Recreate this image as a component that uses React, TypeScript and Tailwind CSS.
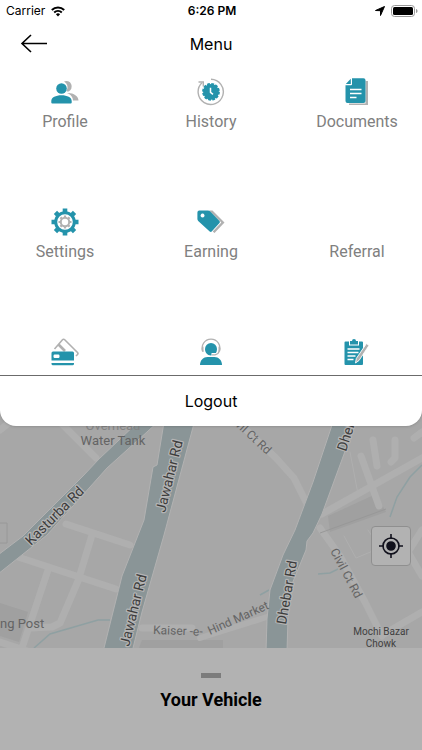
import React from "react"

const TEAL = "#2493ab"
const GREY = "#b1b1b1"

function ProfileIcon() {
  return (
    <svg viewBox="0 0 28 28" className="size-7">
      <g fill={GREY}>
        <path d="M13 3.500a5 5 0 1 1 4.500 10c-.8.100-1.500-.2-2-.6a6.500 6.500 0 0 0-2.500-9.400z" />
        <path d="M16 15c6-.5 11.500 3 11.500 7.500h-5.500c0-3.500-2.500-6.200-6-7.500z" />
      </g>
      <circle cx="10.500" cy="10.500" r="5.300" fill={TEAL} />
      <path d="M.3 24.500V23c0-3.500 4.500-5.700 10.200-5.700S20.700 19.500 20.700 23v1.500a1 1 0 0 1-1 1H1.300a1 1 0 0 1-1-1z" fill={TEAL} />
    </svg>
  )
}

function HistoryIcon() {
  return (
    <svg viewBox="0 0 28 28" className="size-7" fill="none">
      <path d="M14 1.200a12.600 12.600 0 1 1-9 3.500" stroke={GREY} strokeWidth="1.400" />
      <path d="M1.500 4h4.800v4.500" stroke={GREY} strokeWidth="1.400" />
      <circle cx="14" cy="13.800" r="7.900" fill={TEAL} />
      <circle cx="14" cy="13.800" r="8" stroke={TEAL} strokeWidth="1.800" strokeDasharray="2.800 1.390" />
      <path d="M13.500 9.800v4.500l2.500 2" stroke="white" strokeWidth="1.500" />
    </svg>
  )
}

function DocumentsIcon() {
  return (
    <svg viewBox="0 0 28 28" className="size-7">
      <path d="M22.500 3H25v24H6v-1.500h16.500z" fill={GREY} />
      <path d="M9 .3h11.500a2 2 0 0 1 2 2V23a2 2 0 0 1-2 2h-16a2 2 0 0 1-2-2V7.300H8a1 1 0 0 0 1-1z" fill={TEAL} />
      <path d="M2.800 6 7.800.8V6z" fill={TEAL} />
      <path d="M7 11.500h11.500M7 15.500h11.500M7 19.500h6.500" stroke="white" strokeWidth="1.400" />
    </svg>
  )
}

function Gear({ size, hole, color }: { size: number; hole: number; color: string }) {
  const body = size * 0.8
  return (
    <g stroke={color} fill="none">
      <circle cx="14" cy="14" r={(body + hole) / 2} strokeWidth={body - hole} />
      {[0, 45, 90, 135].map((angle) => (
        <path
          key={angle}
          d={`M14 ${14 - size}V${14 - hole - 1}M14 ${14 + hole + 1}V${14 + size}`}
          strokeWidth={size * 0.34}
          transform={`rotate(${angle} 14 14)`}
        />
      ))}
    </g>
  )
}

function SettingsIcon() {
  return (
    <svg viewBox="0 0 28 28" className="size-7">
      <Gear size={13.500} hole={7.800} color={TEAL} />
      <Gear size={6.500} hole={3.200} color={GREY} />
    </svg>
  )
}

function EarningIcon() {
  return (
    <svg viewBox="0 0 28 28" className="size-7">
      <path d="M12 2.500h3.500L27.500 14.500 17.500 25l-1.800-1.500 8.600-9z" fill={GREY} />
      <path
        fillRule="evenodd"
        d="M2.500 2.500h8.500a3 3 0 0 1 2 .8L22.500 13a1.500 1.500 0 0 1 0 2l-7.800 8.500a1.500 1.500 0 0 1-2 0L1.200 13a3 3 0 0 1-.8-2V4.500a2 2 0 0 1 2.100-2zM5.500 5.600a2 2 0 1 0 .1 0z"
        fill={TEAL}
      />
    </svg>
  )
}

function CardsIcon() {
  return (
    <svg viewBox="0 0 28 28" className="size-7">
      <path d="M3.500 11 11.500 1.800a1.500 1.500 0 0 1 2.200-.1L26.500 14.500a1.500 1.500 0 0 1 0 2L25 18" fill="none" stroke={GREY} strokeWidth="1.600" />
      <path d="M7.500 6.500l6.500 6.500" stroke={GREY} strokeWidth="2.600" />
      <path d="M2 13.500h19.500a1.500 1.500 0 0 1 1.500 1.500v7.500H.5V15A1.500 1.500 0 0 1 2 13.500z" fill={TEAL} />
      <path d="M.5 25H23v.7a1.500 1.500 0 0 1-1.500 1.500H2A1.500 1.500 0 0 1 .5 25.700z" fill={TEAL} />
      <rect x="2.500" y="16.500" width="6" height="3.500" rx="1.200" fill="white" />
    </svg>
  )
}

function SupportIcon() {
  return (
    <svg viewBox="0 0 28 28" className="size-7">
      <path d="M6 13.500a8.800 8.800 0 1 1 16 0c-.3 2-2 3-4 3.300h-3" fill="none" stroke={GREY} strokeWidth="1.200" />
      <path d="M6.500 8.500v5.500a2 2 0 0 1-2-2v-1.500a2 2 0 0 1 2-2zM21.500 8.500a2 2 0 0 1 2 2V12a2 2 0 0 1-2 2z" fill={GREY} />
      <path d="M8 11a6 6 0 0 1 12 0c0 1.500-.4 2.900-1.100 4h-4.400v2.400C10.500 17.700 8 14.800 8 11z" fill={TEAL} />
      <path d="M3 27c0-5 3.500-8 7.500-8h7c4 0 7.500 3 7.500 8z" fill={TEAL} />
    </svg>
  )
}

function SurveyIcon() {
  return (
    <svg viewBox="0 0 28 28" className="size-7">
      <path d="M2.500 3.500H6V7.500h10v-4h3a1 1 0 0 1 1 1V26a1 1 0 0 1-1 1H2.500a1 1 0 0 1-1-1V4.500a1 1 0 0 1 1-1z" fill={TEAL} />
      <path d="M7 3h2a2 2 0 0 1 4 0h2v3.500H7z" fill={TEAL} />
      <path d="M4.500 11h12M4.500 14.500h11M4.500 18h8M4.500 21.500h6" stroke="white" strokeWidth="1.300" />
      <path d="M12.500 25l.8-4.500L23.500 5.500l2.500 2L16 22.500z" fill={GREY} stroke="white" strokeWidth=".9" />
    </svg>
  )
}

const items = [
  { label: "Profile", icon: <ProfileIcon /> },
  { label: "History", icon: <HistoryIcon /> },
  { label: "Documents", icon: <DocumentsIcon /> },
  { label: "Settings", icon: <SettingsIcon /> },
  { label: "Earning", icon: <EarningIcon /> },
  { label: "Referral", icon: null },
  { label: "", name: "Payment", icon: <CardsIcon /> },
  { label: "", name: "Support", icon: <SupportIcon /> },
  { label: "", name: "Survey", icon: <SurveyIcon /> },
]

function StatusBar() {
  return (
    <div className="grid h-[22px] grid-cols-3 items-center pr-1 pl-1.5 font-['Inter',sans-serif] text-xs text-black">
      <div className="flex items-center gap-1.5">
        <span>Carrier</span>
        <svg viewBox="0 0 14 11" className="h-[11px] w-3.5" fill="none" stroke="black" strokeWidth="2">
          <path d="M.8 4a9 9 0 0 1 12.400 0M3.200 6.500a5.500 5.500 0 0 1 7.600 0" />
          <path d="M7 10.500 4.900 8.300a3 3 0 0 1 4.200 0z" fill="black" stroke="none" />
        </svg>
      </div>
      <span className="text-center font-semibold">6:26 PM</span>
      <div className="flex items-center justify-end gap-1.5">
        <svg viewBox="0 0 10 10" className="size-2.5">
          <path d="M9.500.5 5.500 9.500V4.700L.5 4.500z" fill="black" stroke="black" strokeLinejoin="round" />
        </svg>
        <svg viewBox="0 0 27 12" className="h-3 w-[27px]">
          <rect x=".5" y=".5" width="23" height="11" rx="3" fill="none" stroke="#999" />
          <rect x="2" y="2" width="20" height="8" rx="1.500" fill="black" />
          <path d="M25 4c2 .5 2 3.500 0 4z" fill="#999" />
        </svg>
      </div>
    </div>
  )
}

function MapView() {
  return (
    <svg
      viewBox="0 410 422 238"
      preserveAspectRatio="xMidYMid slice"
      className="absolute inset-0 size-full font-['Roboto',sans-serif]"
      aria-label="Map"
    >
      <rect y="400" width="422" height="260" fill="#a7a7a7" />
      {/* building blocks */}
      <g fill="#a0a0a0">
        <path d="M0 603l28 9-9 30-19-6z" />
        <path d="M142 640h81v8h-84z" />
        <path d="M328 516l48-22 10 18-56 20z" />
      </g>
      {/* side streets */}
      <g fill="none" stroke="#afafaf" strokeWidth="7" strokeLinejoin="round" strokeLinecap="round">
        <path d="M0 430l10-8M62 424l34 34M66 524l64 21M18 557l98 32M92 535l-14 46-18 42-8 4-22 1M48 570l-26 78M0 642l30 10" />
        <path d="M240 424l36 34 18 20 14 28M320 528l20 28 25 46 17 34M322 514l100-56M361 456l18 50M373 440l4 26M395 440v18l-4 4M422 432l-8 6M384 634l38-22M142 628h50M422 530l-14 22 14 24" />
        <path d="M200 638l70-22" strokeWidth="6" />
        <path d="M350 452l8 42M344 536l12 22 24-10-12-18" strokeWidth="1" />
      </g>
      <path d="M0 523h7v20H0M320 533l66-24" fill="none" stroke="#989898" />
      {/* streams */}
      <path d="M34 648l16-14 48-14h12M422 465l-12 12-13 20-7 20M318 574l12-1 8-4M260 595l9-5" fill="none" stroke="#8fa0a2" strokeWidth="1.500" />
      {/* main roads */}
      <g fill="#8a9597" stroke="#b2b2b2" strokeWidth="1">
        <path d="M138 422h20l-51 46-60 67L-2 574v-19l25-19 60-60 16-17z" />
        <path d="M165 416h31l-32 119-22 77-10 40h-29l13-52 6-24 22-56 9-53 4-2z" />
        <path d="M335 416h23l-36 98-9 19-6 8-1 9-14 34-4 34-1 34h-21l1-33 3-29 13-35 12-25 18-48z" />
      </g>
      <g fontSize="14" fill="#3d3d3d" stroke="#b4b4b4" strokeWidth="2.500" paintOrder="stroke" strokeLinejoin="round">
        <text transform="translate(31 546) rotate(-45)">Kasturba Rd</text>
        <text transform="translate(165 513) rotate(-76)">Jawahar Rd</text>
        <text transform="translate(129 647) rotate(-76)">Jawahar Rd</text>
        <text transform="translate(286 625) rotate(-80)">Dhebar Rd</text>
        <text transform="translate(346 452) rotate(-72)">Dhebar Rd</text>
      </g>
      <g fontSize="12" fill="#646464">
        <text x="113" y="430" fontSize="13" textAnchor="middle" fill="#858585">Overhead</text>
        <text x="113" y="445" fontSize="13" textAnchor="middle">Water Tank</text>
        <text x="0" y="628" fontSize="13">ng Post</text>
        <text transform="translate(227 418) rotate(43)">Civil Ct Rd</text>
        <text transform="translate(330 551) rotate(62)">Civil Ct Rd</text>
        <text transform="translate(153 634) rotate(2)">Kaiser -e-</text>
        <text transform="translate(210 635) rotate(-24)">Hind Market</text>
      </g>
      <g fontSize="10" fill="#404040" textAnchor="middle">
        <text x="381" y="635">Mochi Bazar</text>
        <text x="381" y="647">Chowk</text>
      </g>
    </svg>
  )
}

export default function App() {
  return (
    <div className="flex min-h-screen flex-col bg-[#b2b2b2] font-['Roboto',sans-serif]">
      <div className="relative z-10 rounded-b-2xl bg-white shadow-sm">
        <StatusBar />
        <header className="grid h-11 grid-cols-3 items-center px-5">
          <button type="button" aria-label="Back" className="w-fit">
            <svg viewBox="0 0 28 20" className="h-5 w-7" fill="none" stroke="black" strokeWidth="1.600">
              <path d="M27 9.500H2M11 1 2 9.500l9 8.500" />
            </svg>
          </button>
          <h1 className="text-center font-['Inter',sans-serif] text-base text-black">Menu</h1>
        </header>
        <nav className="grid h-[309px] grid-cols-[130px_1fr_130px] overflow-hidden pt-3">
          {items.map((item) => (
            <a
              key={item.label || item.name}
              href="#"
              aria-label={item.label || item.name}
              className="flex h-[130px] flex-col items-center gap-1"
            >
              <span className="size-7">{item.icon}</span>
              <span className="text-base text-[#808080]">{item.label}</span>
            </a>
          ))}
        </nav>
        <button
          type="button"
          className="h-[51px] w-full border-t border-[#6b6b6b] font-['Inter',sans-serif] text-base text-black"
        >
          Logout
        </button>
      </div>

      <section className="relative -mt-4 flex min-h-[238px] flex-1 items-end justify-end overflow-hidden">
        <MapView />
        <button
          type="button"
          aria-label="My location"
          className="relative mr-[11px] mb-[82px] flex size-10 items-center justify-center rounded-sm border border-[#8f8f8f] bg-[#b2b2b2]"
        >
          <svg viewBox="0 0 26 26" className="size-[26px]" fill="none" stroke="#11111c" strokeWidth="1.600">
            <circle cx="13" cy="13" r="8" />
            <circle cx="13" cy="13" r="4" fill="#11111c" />
            <path d="M13 1v5M13 20v5M1 13h5M20 13h5" />
          </svg>
        </button>
      </section>

      <footer className="flex h-[102px] flex-col items-center gap-2 bg-[#b2b2b2] pt-[25px]">
        <span className="h-[5px] w-5 bg-[#7c7c7c]" />
        <h2 className="text-lg font-bold text-black">Your Vehicle</h2>
      </footer>
    </div>
  )
}
